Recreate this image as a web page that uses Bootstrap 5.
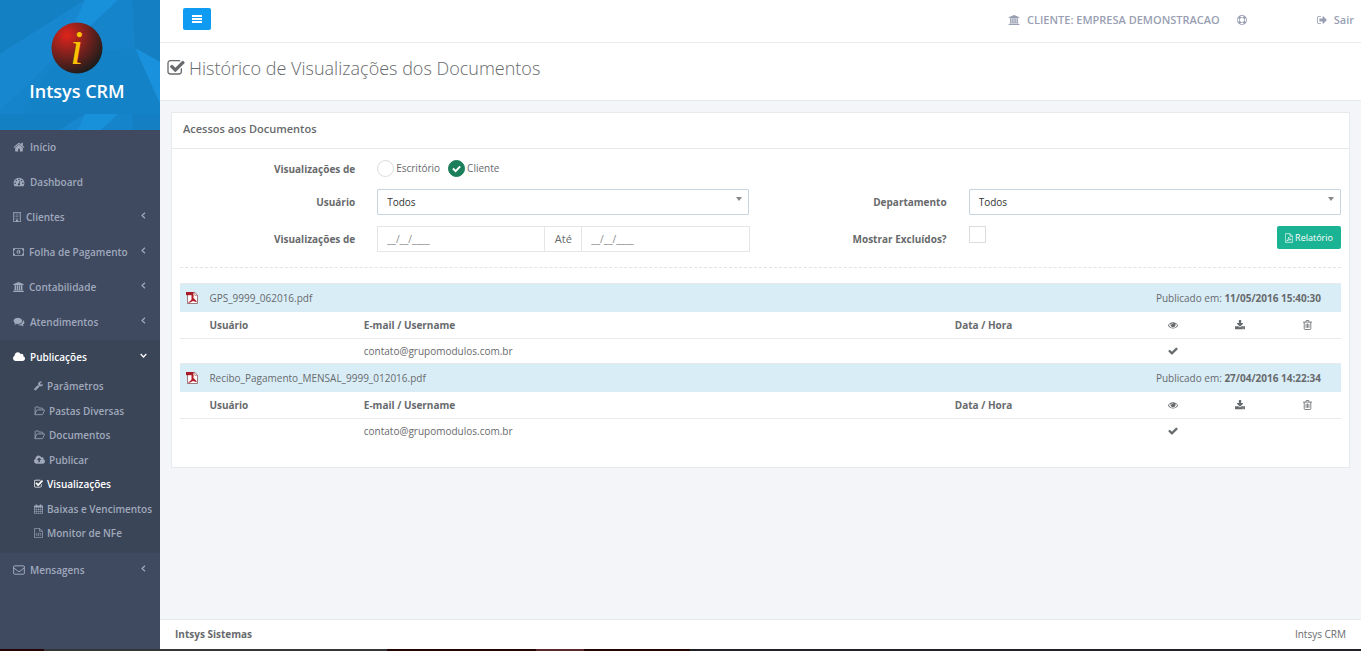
<!DOCTYPE html>
<html lang="pt-BR">
<head>
<meta charset="utf-8">
<meta name="viewport" content="width=device-width, initial-scale=1">
<title>Intsys CRM</title>
<link href="https://cdn.jsdelivr.net/npm/bootstrap@5.3.0/dist/css/bootstrap.min.css" rel="stylesheet">
<style>
  body { font-family: "Open Sans", sans-serif; font-size: 10px; line-height: 16px; color: #676a6c; background: #f3f5f9; }
  a { text-decoration: none; }
  .row { --bs-gutter-x: 22px; }
  .ico { height: 10px; width: 10px; fill: currentColor; flex: none; }
  .w8 { width: 8px; } .w9 { width: 9px; } .w11 { width: 11px; } .w12 { width: 12px; }

  .side { width: 160px; background: #3f4a61; }
  .side-head { height: 130px; background: #1583c9; overflow: hidden; }
  .side-head .facets { inset: 0; width: 100%; height: 100%; }
  .side-brand { padding: 22px 6px 0 0; }
  .logo { width: 52px; height: 52px; }
  .brand { font-size: 18px; line-height: 24px; font-weight: 600; color: #fff; margin-top: 5px; }
  .side a { color: #a0a9bc; font-weight: 600; gap: 5px; white-space: nowrap; }
  .side .item { height: 35px; padding: 0 13px 2px; }
  .side .chev { width: 7px; height: 7px; margin: 0 0 3px auto; fill: none; stroke: currentColor; stroke-width: 1.2; }
  .side .open-group { background: #3a4557; padding-bottom: 9px; }
  .side .open-group > .item, .side .sub .active { color: #fff; }
  .sub { height: 169px; padding-left: 34px; }
  .sub a { height: 22px; gap: 4px; }

  .topbar { height: 43px; border-bottom: 1px solid #e7eaec; background: #fff; padding: 0 7px 3px 23px; }
  .topbar a { color: #999fb3; font-size: 11px; font-weight: 600; gap: 7px; }
  .topbar .help { margin: 0 69px 0 16px; }
  .btn-menu { width: 28px; height: 22px; margin-bottom: 2px; background: #0f9bf2; border: 0; border-radius: 2px; color: #fff; }
  .page-head { height: 58px; border-bottom: 1px solid #e7eaec; background: #fff; padding: 13px 7px 0; }
  .page-head h1 { font-size: 18px; line-height: 24px; font-weight: 300; gap: 4px; }
  .page-head .ico { width: 18px; height: 16px; }

  .panel { border: 1px solid #e7eaec; background: #fff; margin: 11px 11px 0; }
  .panel-title { font-size: 11px; line-height: 16px; font-weight: 600; padding: 8px 11px 11px; border-bottom: 1px solid #e7eaec; }
  .panel-main { padding: 11px 8px 23px; }
  .lab { font-weight: 700; text-align: right; }
  .choices { gap: 2px; }
  .choices .tick + label { margin-right: 6px; padding-bottom: 1px; }
  .tick { appearance: none; width: 17px; height: 17px; margin: 0; border: 1px solid #dcdcd8; background: #fff; flex: none; }
  .tick[type=radio] { border-radius: 50%; }
  .tick[type=radio]:checked { border-color: #1a7f5a; background: #1a7f5a url("data:image/svg+xml,%3Csvg xmlns='http://www.w3.org/2000/svg' viewBox='0 0 15 15'%3E%3Cpath d='M4 7.5l2.6 2.6L11.2 5.4' fill='none' stroke='white' stroke-width='2'/%3E%3C/svg%3E") center/100% no-repeat; }
  .drop { height: 26px; border: 1px solid #c8d5df; border-radius: 1px; padding: 0 9px; font-size: 10px; color: #333; appearance: none;
    background: #fff url("data:image/svg+xml,%3Csvg xmlns='http://www.w3.org/2000/svg' viewBox='0 0 6 4'%3E%3Cpath d='M0 0h6L3 4z' fill='%23888'/%3E%3C/svg%3E") right 6px top 7px/6px 4px no-repeat; }
  .period { margin-top: 11px; }
  .date-in { height: 26px; min-width: 0; flex: 1 1 0; border: 1px solid #e5e6e7; padding: 0 9px; font-size: 10px; color: #888; }
  .until { width: 36px; font-size: 11px; border: 1px solid #e5e6e7; border-width: 1px 0; }
  .btn-report { background: #1ab394; color: #fff; font-size: 9px; line-height: 15px; padding: 4px 8px; border: 0; border-radius: 2px; gap: 2px; }
  .rule { border-top: 1px dashed #e1e4e6; margin: 15px 0; }

  .log { table-layout: fixed; width: 100%; }
  .log th, .log td { padding: 0 5px; height: 25px; vertical-align: middle; }
  .log .doc td { background: #d9edf7; height: 28px; border-top: 1px solid #e7eaec; }
  .log .heads th { height: 27px; border-bottom: 1px solid #e7eaec; font-weight: 700; }
  .log .when { padding-right: 20px; text-align: right; }
  .log .ico { display: block; margin: 0 auto; }
  .log .pdf { width: 13px; height: 13px; display: block; }

  .foot { border-top: 1px solid #e7eaec; background: #fff; padding: 6px 15px 7px; }
  .strip { height: 2px; background: linear-gradient(90deg, #250605 0 3.2%, #333537 3.2% 28.4%, #250605 28.4% 39.4%, #5a2a2a 39.4% 42.9%, #250605 42.9% 50.7%, #212227 50.7%); }
</style>
</head>
<body>
<svg class="d-none" aria-hidden="true">
  <symbol id="home" viewBox="64 128 1664 1500"><path d="M1472 992v480q0 26-19 45t-45 19h-384v-384h-256v384h-384q-26 0-45-19t-19-45v-480q0-1 .5-3t.5-3l575-474 575 474q1 2 1 6zm223-69l-62 74q-8 9-21 11h-3q-13 0-21-7l-692-577-692 577q-12 8-24 7-13-2-21-11l-62-74q-8-10-7-23.5t11-21.5l719-599q32-26 76-26t76 26l244 204v-195q0-14 9-23t23-9h192q14 0 23 9t9 23v408l219 182q10 8 11 21.5t-7 23.5z"/></symbol>
  <symbol id="dash" viewBox="0 128 1792 1664"><path d="M384 1152q0-53-37.500-90.500t-90.500-37.500-90.500 37.500-37.500 90.500 37.500 90.500 90.500 37.500 90.500-37.500 37.500-90.500zm192-448q0-53-37.500-90.500t-90.500-37.500-90.500 37.500-37.500 90.500 37.500 90.500 90.500 37.500 90.500-37.500 37.500-90.500zm428 481l101-382q6-26-7.500-48.500t-38.500-29.500-48 6.500-30 39.500l-101 382q-60 5-107 43.500t-63 98.500q-20 77 20 146t117 89 146-20 89-117q16-60-6-117t-72-91zm660-33q0-53-37.500-90.500t-90.500-37.500-90.500 37.500-37.500 90.500 37.500 90.500 90.500 37.500 90.500-37.500 37.500-90.500zm-640-640q0-53-37.500-90.500t-90.500-37.500-90.500 37.500-37.500 90.500 37.500 90.500 90.500 37.500 90.500-37.500 37.500-90.500zm448 192q0-53-37.500-90.500t-90.500-37.500-90.500 37.500-37.500 90.500 37.500 90.500 90.500 37.500 90.500-37.500 37.500-90.500zm320 448q0 261-141 483-19 29-54 29h-1402q-35 0-54-29-141-221-141-483 0-182 71-348t191-286 286-191 348-71 348 71 286 191 191 286 71 348z"/></symbol>
  <symbol id="building" viewBox="0 0 11 14"><path fill-rule="evenodd" d="M.5 0h10a.5.5 0 0 1 .5.500v13a.5.5 0 0 1-.5.500H.5a.5.5 0 0 1-.5-.5V.5A.5.5 0 0 1 .5 0zM1 1v12h3v-2.500h3V13h3V1zM2 2h1v1H2zm2 0h1v1H4zm2 0h1v1H6zm2 0h1v1H8zM2 4h1v1H2zm2 0h1v1H4zm2 0h1v1H6zm2 0h1v1H8zM2 6h1v1H2zm2 0h1v1H4zm2 0h1v1H6zm2 0h1v1H8zM2 8h1v1H2zm2 0h1v1H4zm2 0h1v1H6zm2 0h1v1H8zM2 10h1v1H2zm6 0h1v1H8z"/></symbol>
  <symbol id="money" viewBox="0 0 15 12"><path fill-rule="evenodd" d="M0 1h15v10H0zM3 2a2 2 0 0 1-2 2v4a2 2 0 0 1 2 2h9a2 2 0 0 1 2-2V4a2 2 0 0 1-2-2zm4.500 1c1.400 0 2.500 1.400 2.500 3s-1.100 3-2.500 3S5 7.600 5 6s1.100-3 2.500-3zM7 4l-1 1 .4.500.6-.4V7H6v1h3V7H8V4z"/></symbol>
  <symbol id="bank" viewBox="0 0 1920 1792"><path d="M960 0l960 384v128h-128q0 26-20.500 45t-48.500 19h-1526q-28 0-48.500-19t-20.500-45h-128v-128zm-704 640h256v768h128v-768h256v768h128v-768h256v768h128v-768h256v768h59q28 0 48.500 19t20.500 45v64h-1664v-64q0-26 20.500-45t48.500-19h59v-768zm1595 960q28 0 48.500 19t20.500 45v128h-1920v-128q0-26 20.500-45t48.500-19h1782z"/></symbol>
  <symbol id="chat" viewBox="0 128 1792 1664"><path d="M1408 768q0 139-94 257t-256.500 186.500-353.500 68.500q-86 0-176-16-124 88-278 128-36 9-86 16h-3q-11 0-20.500-8t-11.500-21q-1-3-1-6.500t.5-6.500 2-6l2.500-5 3.500-5.500 4-5 4.500-5 4-4.500q5-6 23-25t26-29.500 22.500-29 25-38.500 20.500-44q-124-72-195-177t-71-224q0-139 94-257t256.500-186.500 353.500-68.500 353.500 68.500 256.500 186.500 94 257zm384 256q0 120-71 224.500t-195 176.500q10 24 20.500 44t25 38.500 22.500 29 26 29.500 23 25q1 1 4 4.500t4.500 5 4 5 3.500 5.500l2.500 5 2 6 .5 6.500-1 6.500q-3 14-13 22t-22 7q-50-7-86-16-154-40-278-128-90 16-176 16-271 0-472-132 58 4 88 4 161 0 309-45t264-129q125-92 192-212t67-254q0-77-23-152 129 71 204 178t75 230z"/></symbol>
  <symbol id="cloud" viewBox="64 128 1920 1536"><path d="M1984 1152q0 159-112.500 271.500t-271.500 112.500h-1088q-185 0-316.500-131.500t-131.500-316.500q0-132 71-241.500t187-163.500q-2-28-2-43 0-212 150-362t362-150q158 0 286.500 88t187.500 230q70-62 166-62 106 0 181 75t75 181q0 75-41 138 129 30 213 134.500t84 239.500z"/></symbol>
  <symbol id="cloudup" viewBox="0 128 1920 1536"><path d="M1280 864q0-14-9-23l-352-352q-9-9-23-9t-23 9l-351 351q-10 12-10 24 0 14 9 23t23 9h224v352q0 13 9.500 22.500t22.500 9.500h192q13 0 22.500-9.500t9.500-22.500v-352h224q13 0 22.500-9.500t9.500-22.500zm640 288q0 159-112.500 271.500t-271.500 112.500h-1088q-185 0-316.500-131.500t-131.500-316.500q0-130 70-240t188-165q-2-30-2-43 0-212 150-362t362-150q156 0 285.500 87t188.500 231q71-62 166-62 106 0 181 75t75 181q0 76-41 138 130 31 213.500 135.500t83.500 238.500z"/></symbol>
  <symbol id="wrench" viewBox="64 128 1664 1664"><path d="M448 1472q0-26-19-45t-45-19-45 19-19 45 19 45 45 19 45-19 19-45zm644-420l-682 682q-37 37-90 37-52 0-91-37l-106-108q-38-36-38-90 0-53 38-91l681-681q39 98 114.500 173.500t173.500 114.500zm634-435q0 39-23 106-47 134-164.500 217.500t-258.500 83.500q-185 0-316.500-131.500t-131.500-316.500 131.500-316.500 316.500-131.500q58 0 121.500 16.500t107.500 46.500q16 11 16 28t-16 28l-293 169v224l193 107q5-3 79-48.500t135.500-81 70.500-35.500q15 0 23.500 10t8.500 25z"/></symbol>
  <symbol id="folder" viewBox="0 0 15 13"><path fill="none" stroke="currentColor" stroke-width="1.100" stroke-linejoin="round" d="M12 5V3.500a1 1 0 0 0-1-1H6.500v-.5a1 1 0 0 0-1-1h-3a1 1 0 0 0-1 1v8M1 11.500L3.600 5.600Q4 5 4.600 5H14q.8 0 .3.900L12 10.900q-.4.600-1.100.6z"/></symbol>
  <symbol id="checksq" viewBox="64 128 1664 1536"><path d="M1472 930v318q0 119-84.500 203.500t-203.500 84.500h-832q-119 0-203.500-84.500t-84.500-203.500v-832q0-119 84.500-203.500t203.500-84.500h832q63 0 117 25 15 7 18 23 3 17-9 29l-49 49q-10 10-23 10-3 0-9-2-23-6-45-6h-832q-66 0-113 47t-47 113v832q0 66 47 113t113 47h832q66 0 113-47t47-113v-254q0-13 9-22l64-64q10-10 23-10 6 0 12 3 20 8 20 29zm231-489l-814 814q-24 24-57 24t-57-24l-430-430q-24-24-24-57t24-57l110-110q24-24 57-24t57 24l263 263 647-647q24-24 57-24t57 24l110 110q24 24 24 57t-24 57z"/></symbol>
  <symbol id="calendar" viewBox="0 0 13 14"><path fill-rule="evenodd" d="M1 2h1.500V.5h2V2h4V.5h2V2H12a1 1 0 0 1 1 1v10a1 1 0 0 1-1 1H1a1 1 0 0 1-1-1V3a1 1 0 0 1 1-1zm0 3v2h2.200V5zm2.800 0v2h2.400V5zm3 0v2h2.400V5zm3 0v2H12V5zM1 7.600V10h2.200V7.600zm2.800 0V10h2.400V7.600zm3 0V10h2.400V7.600zm3 0V10H12V7.600zM1 10.600V13h2.200v-2.400zm2.800 0V13h2.400v-2.400zm3 0V13h2.400v-2.400zm3 0V13H12v-2.400z"/></symbol>
  <symbol id="filecode" viewBox="0 0 12 14"><path fill="none" stroke="currentColor" d="M.5.500h7l4 4v9H.5zM7.500.500v4h4M4 7L2.500 9 4 11m4-4l1.500 2L8 11M6.600 6.500l-1.200 5"/></symbol>
  <symbol id="filepdf" viewBox="0 0 12 14"><path fill="none" stroke="currentColor" d="M.5.500h7l4 4v9H.5zM7.500.500v4h4M2.500 11.500Q5 10 5.500 5.500 6 9 9.500 9.500 6 9 2.500 11.500z"/></symbol>
  <symbol id="mail" viewBox="0 0 14 12"><path fill="none" stroke="currentColor" stroke-width="1.200" d="M1.500 1h11a.9.9 0 0 1 .9.900v8.200a.9.9 0 0 1-.9.900h-11a.9.900 0 0 1-.9-.9V1.900a.9.900 0 0 1 .9-.9zM.8 3.500l4.800 3.800q1.400 1 2.800 0l4.800-3.800"/></symbol>
  <symbol id="ring" viewBox="0 0 14 14"><path fill-rule="evenodd" d="M7 0a7 7 0 1 1 0 14A7 7 0 0 1 7 0zm0 4a3 3 0 1 0 0 6 3 3 0 0 0 0-6zM4.300 1.700a6 6 0 0 1 5.400 0L8.200 3.200a4 4 0 0 0-2.400 0zm0 10.600a6 6 0 0 0 5.400 0l-1.500-1.500a4 4 0 0 1-2.400 0zM1.700 4.300a6 6 0 0 0 0 5.400l1.500-1.500a4 4 0 0 1 0-2.400zm10.600 0a6 6 0 0 1 0 5.400l-1.500-1.500a4 4 0 0 0 0-2.400z"/></symbol>
  <symbol id="exit" viewBox="64 128 1600 1536"><path d="M704 1440q0 4 1 20t.5 26.500-3 23.500-10 19.500-20.500 6.500h-320q-119 0-203.500-84.500t-84.500-203.500v-704q0-119 84.500-203.500t203.500-84.500h320q13 0 22.500 9.500t9.500 22.500q0 4 1 20t.5 26.500-3 23.500-10 19.500-20.500 6.500h-320q-66 0-113 47t-47 113v704q0 66 47 113t113 47h312l11.500 1 11.500 3 8 5.500 7 9 2 13.500zm928-544q0 26-19 45l-544 544q-19 19-45 19t-45-19-19-45v-288h-448q-26 0-45-19t-19-45v-384q0-26 19-45t45-19h448v-288q0-26 19-45t45-19 45 19l544 544q19 19 19 45z"/></symbol>
  <symbol id="eye" viewBox="0 0 1792 1792"><path d="M1664 960q-152-236-381-353 61 104 61 225 0 185-131.500 316.500t-316.500 131.500-316.500-131.500-131.500-316.500q0-121 61-225-229 117-381 353 133 205 333.500 326.500t434.500 121.500 434.500-121.500 333.500-326.500zm-720-384q0-20-14-34t-34-14q-125 0-214.500 89.500t-89.500 214.500q0 20 14 34t34 14 34-14 14-34q0-86 61-147t147-61q20 0 34-14t14-34zm848 384q0 34-20 69-140 230-376.500 368.500t-499.500 138.500-499.500-139-376.500-368q-20-35-20-69t20-69q140-229 376.500-368t499.500-139 499.500 139 376.500 368q20 35 20 69z"/></symbol>
  <symbol id="down" viewBox="64 0 1664 1664"><path d="M1344 1344q0-26-19-45t-45-19-45 19-19 45 19 45 45 19 45-19 19-45zm256 0q0-26-19-45t-45-19-45 19-19 45 19 45 45 19 45-19 19-45zm128-224v320q0 40-28 68t-68 28h-1472q-40 0-68-28t-28-68v-320q0-40 28-68t68-28h465l135 136q58 56 136 56t136-56l136-136h464q40 0 68 28t28 68zm-325-569q17 41-14 70l-448 448q-18 19-45 19t-45-19l-448-448q-31-29-14-70 17-39 59-39h256v-448q0-26 19-45t45-19h256q26 0 45 19t19 45v448h256q42 0 59 39z"/></symbol>
  <symbol id="trash" viewBox="0 0 11 12"><path fill="none" stroke="currentColor" d="M0 2.500h11M1.500 2.500v8a1 1 0 0 0 1 1h6a1 1 0 0 0 1-1v-8M3.500 2.300L4 .5h3l.5 1.800M3.800 4.500v5m1.700-5v5m1.700-5v5"/></symbol>
  <symbol id="check" viewBox="64 128 1664 1536"><path d="M1671 566q0 40-28 68l-724 724-136 136q-28 28-68 28t-68-28l-136-136-362-362q-28-28-28-68t28-68l136-136q28-28 68-28t68 28l294 295 656-657q28-28 68-28t68 28l136 136q28 28 28 68z"/></symbol>
  <symbol id="left" viewBox="0 0 7 7"><path d="M5 .7L2 3.500l3 2.800"/></symbol>
  <symbol id="open" viewBox="0 0 7 7"><path d="M.7 2l2.800 3 2.800-3"/></symbol>
  <symbol id="pdf" viewBox="0 0 13 13"><path d="M2.500 1.500H10l2.500 3v8h-10z" fill="#fff" stroke="#8d5a5c" stroke-width=".8"/><path d="M9.800 1.500v3h2.700" fill="none" stroke="#a66" stroke-width=".6"/><path d="M1 1h7.500v3.200H1z" fill="#a91c27"/><path d="M6.500 4h2v3l3 3v1.200L8 10l-4 2H3l3.500-3.500z" fill="#b31e29"/></symbol>
</svg>

<div class="d-flex flex-column min-vh-100">
<div class="d-flex flex-grow-1">
  <nav class="side flex-shrink-0" aria-label="Menu principal">
    <div class="side-head position-relative">
      <svg class="facets position-absolute" aria-hidden="true">
        <defs>
          <pattern id="tile" width="160" height="114" patternUnits="userSpaceOnUse">
            <rect width="160" height="114" fill="#1584ca"/>
            <path d="M0 0h85L0 54z" fill="#1480c4"/>
            <path d="M85 0L60 52 28 84 0 110V54z" fill="#1787cf"/>
            <path d="M85 0h33L60 54z" fill="#1990da"/>
            <path d="M132 0h28v62l-25-14z" fill="#147fc2"/>
            <path d="M135 48l25 14v42z" fill="#1991dc"/>
            <path d="M60 54l75-6 25 56v10H20z" fill="#1482c7"/>
          </pattern>
          <radialGradient id="ball" cx=".3" cy=".25" r=".8"><stop offset="0" stop-color="#e0241c"/><stop offset=".5" stop-color="#7c211d"/><stop offset="1" stop-color="#1c1d1b"/></radialGradient>
        </defs>
        <rect width="100%" height="100%" fill="url(#tile)"/>
      </svg>
      <div class="side-brand position-relative d-flex flex-column align-items-center">
        <svg class="logo" viewBox="0 0 52 52" role="img" aria-label="Intsys"><circle cx="26" cy="26" r="25.500" fill="url(#ball)"/><text x="19" y="42" font-family="Liberation Serif, serif" font-style="italic" font-size="48" fill="#fcc100">i</text></svg>
        <div class="brand">Intsys CRM</div>
      </div>
    </div>
    <a href="#" class="item d-flex align-items-center"><svg class="ico w12"><use href="#home"/></svg>Início</a>
    <a href="#" class="item d-flex align-items-center"><svg class="ico w12"><use href="#dash"/></svg>Dashboard</a>
    <a href="#" class="item d-flex align-items-center"><svg class="ico w8"><use href="#building"/></svg>Clientes<svg class="chev"><use href="#left"/></svg></a>
    <a href="#" class="item d-flex align-items-center"><svg class="ico w11"><use href="#money"/></svg>Folha de Pagamento<svg class="chev"><use href="#left"/></svg></a>
    <a href="#" class="item d-flex align-items-center"><svg class="ico w11"><use href="#bank"/></svg>Contabilidade<svg class="chev"><use href="#left"/></svg></a>
    <a href="#" class="item d-flex align-items-center"><svg class="ico w12"><use href="#chat"/></svg>Atendimentos<svg class="chev"><use href="#left"/></svg></a>
    <div class="open-group">
      <a href="#" class="item d-flex align-items-center"><svg class="ico w12"><use href="#cloud"/></svg>Publicações<svg class="chev"><use href="#open"/></svg></a>
      <div class="sub d-flex flex-column justify-content-between">
        <a href="#" class="d-flex align-items-center"><svg class="ico w9"><use href="#wrench"/></svg>Parâmetros</a>
        <a href="#" class="d-flex align-items-center"><svg class="ico w11"><use href="#folder"/></svg>Pastas Diversas</a>
        <a href="#" class="d-flex align-items-center"><svg class="ico w11"><use href="#folder"/></svg>Documentos</a>
        <a href="#" class="d-flex align-items-center"><svg class="ico w11"><use href="#cloudup"/></svg>Publicar</a>
        <a href="#" class="active d-flex align-items-center" aria-current="page"><svg class="ico w9"><use href="#checksq"/></svg>Visualizações</a>
        <a href="#" class="d-flex align-items-center"><svg class="ico w9"><use href="#calendar"/></svg>Baixas e Vencimentos</a>
        <a href="#" class="d-flex align-items-center"><svg class="ico w9"><use href="#filecode"/></svg>Monitor de NFe</a>
      </div>
    </div>
    <a href="#" class="item d-flex align-items-center"><svg class="ico w12"><use href="#mail"/></svg>Mensagens<svg class="chev"><use href="#left"/></svg></a>
  </nav>

  <div class="d-flex flex-column flex-grow-1">
    <header class="topbar d-flex align-items-center">
      <button type="button" class="btn-menu d-flex align-items-center justify-content-center p-0" aria-label="Alternar menu"><svg width="10" height="8" viewBox="0 0 10 8" fill="currentColor"><path d="M0 0h10v2H0zM0 3h10v2H0zM0 6h10v2H0z"/></svg></button>
      <a href="#" class="d-flex align-items-center ms-auto"><svg class="ico w12"><use href="#bank"/></svg>CLIENTE: EMPRESA DEMONSTRACAO</a>
      <a href="#" class="help d-flex" aria-label="Ajuda"><svg class="ico w12"><use href="#ring"/></svg></a>
      <a href="#" class="d-flex align-items-center"><svg class="ico"><use href="#exit"/></svg>Sair</a>
    </header>
    <div class="page-head"><h1 class="d-flex align-items-center m-0"><svg class="ico"><use href="#checksq"/></svg>Histórico de Visualizações dos Documentos</h1></div>

    <main class="flex-grow-1">
      <section class="panel">
        <h2 class="panel-title m-0">Acessos aos Documentos</h2>
        <div class="panel-main">
          <form>
            <div class="row align-items-center mb-2 pb-1">
              <div class="col-2 lab" id="lab-origem">Visualizações de</div>
              <div class="col-4 choices d-flex align-items-center" role="radiogroup" aria-labelledby="lab-origem">
                <input class="tick" type="radio" name="origem" id="escritorio"><label for="escritorio">Escritório</label>
                <input class="tick" type="radio" name="origem" id="cliente" checked><label for="cliente">Cliente</label>
              </div>
            </div>
            <div class="row align-items-center">
              <label class="col-2 lab" for="usuario">Usuário</label>
              <div class="col-4"><select class="drop w-100 d-block" id="usuario"><option>Todos</option></select></div>
              <label class="col-2 lab" for="depto">Departamento</label>
              <div class="col-4"><select class="drop w-100 d-block" id="depto"><option>Todos</option></select></div>
            </div>
            <div class="row period align-items-center">
              <label class="col-2 lab" for="de">Visualizações de</label>
              <div class="col-4 d-flex">
                <input class="date-in" type="text" id="de" value="__/__/____">
                <label class="until d-flex align-items-center justify-content-center" for="ate">Até</label>
                <input class="date-in" type="text" id="ate" value="__/__/____">
              </div>
              <label class="col-2 lab" for="excluidos">Mostrar Excluídos?</label>
              <div class="col-4 d-flex align-self-start">
                <input class="tick" type="checkbox" id="excluidos">
                <button type="button" class="btn-report ms-auto d-flex align-items-center"><svg class="ico w8"><use href="#filepdf"/></svg>Relatório</button>
              </div>
            </div>
          </form>
          <div class="rule"></div>
          <table class="log">
            <colgroup><col style="width:2.1%"><col style="width:13.3%"><col><col style="width:16.3%"><col style="width:5.8%"><col style="width:5.8%"><col style="width:5.8%"></colgroup>
            <tbody>
              <tr class="doc"><td><svg class="pdf"><use href="#pdf"/></svg></td><td colspan="2">GPS_9999_062016.pdf</td><td colspan="4" class="when">Publicado em: <strong>11/05/2016 15:40:30</strong></td></tr>
              <tr class="heads"><th></th><th>Usuário</th><th>E-mail / Username</th><th>Data / Hora</th><th aria-label="Visualizado"><svg class="ico"><use href="#eye"/></svg></th><th aria-label="Baixado"><svg class="ico"><use href="#down"/></svg></th><th aria-label="Excluído"><svg class="ico w9"><use href="#trash"/></svg></th></tr>
              <tr><td></td><td></td><td>contato@grupomodulos.com.br</td><td></td><td><svg class="ico"><use href="#check"/></svg></td><td></td><td></td></tr>
              <tr class="doc"><td><svg class="pdf"><use href="#pdf"/></svg></td><td colspan="2">Recibo_Pagamento_MENSAL_9999_012016.pdf</td><td colspan="4" class="when">Publicado em: <strong>27/04/2016 14:22:34</strong></td></tr>
              <tr class="heads"><th></th><th>Usuário</th><th>E-mail / Username</th><th>Data / Hora</th><th aria-label="Visualizado"><svg class="ico"><use href="#eye"/></svg></th><th aria-label="Baixado"><svg class="ico"><use href="#down"/></svg></th><th aria-label="Excluído"><svg class="ico w9"><use href="#trash"/></svg></th></tr>
              <tr><td></td><td></td><td>contato@grupomodulos.com.br</td><td></td><td><svg class="ico"><use href="#check"/></svg></td><td></td><td></td></tr>
            </tbody>
          </table>
        </div>
      </section>
    </main>
    <footer class="foot d-flex justify-content-between"><strong>Intsys Sistemas</strong><span>Intsys CRM</span></footer>
  </div>
</div>
<div class="strip"></div>
</div>
<script src="https://cdn.jsdelivr.net/npm/bootstrap@5.3.0/dist/js/bootstrap.bundle.min.js"></script>
</body>
</html>
